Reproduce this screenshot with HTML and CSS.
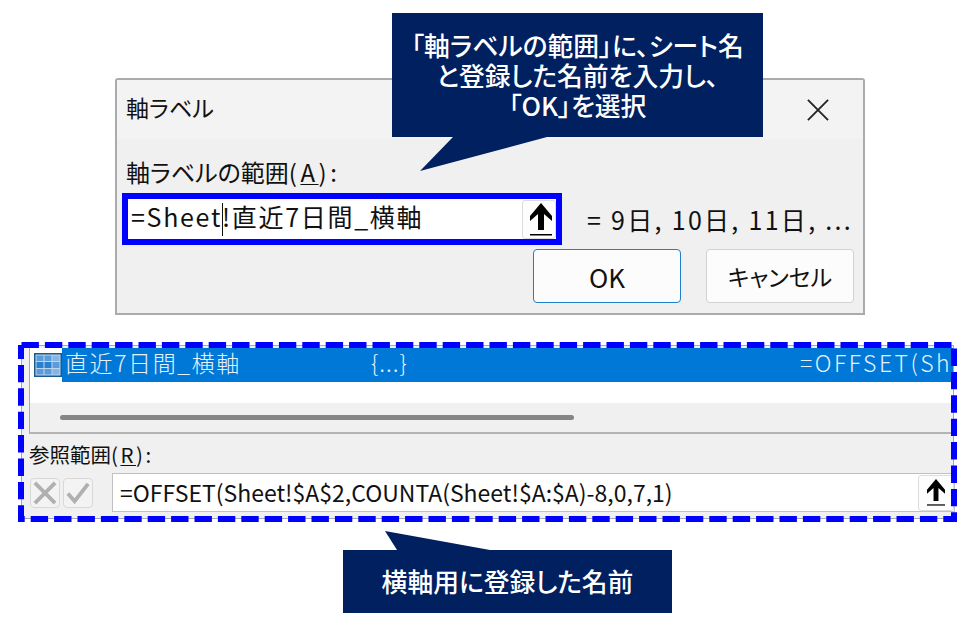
FILE: index.html
```html
<!DOCTYPE html>
<html lang="ja">
    <head>
        <meta charset="utf-8" />
        <title>軸ラベル</title>
        <link rel="stylesheet" href="styles.css">
    </head>
    <body>
        <section class="dialog">
            <header class="dialog-title">
                <span class="title-text">軸ラベル</span>
                <svg class="close" viewBox="0 0 24 24"><path d="M1 1 L23 23 M23 1 L1 23" /></svg>
            </header>
            <div class="dialog-body">
                <div class="field-label">軸ラベルの範囲<span class="key">(<u>A</u>):</span></div>
                <div class="field-row">
                    <div class="range-box">
                        <span class="range-text">=Sheet<i class="caret"></i>!直近7日間_横軸</span>
                        <button class="pick">
                            <svg class="arrow" viewBox="0 0 22 33"><path d="M11 0 L22 13 L22 18 L14 11 V27 H8 V11 L0 18 V13 Z" /><rect y="31" width="22" height="1.5" /></svg>
                        </button>
                    </div>
                    <span class="preview">= 9日, 10日, 11日, ...</span>
                </div>
                <div class="actions">
                    <button class="btn btn-ok">OK</button>
                    <button class="btn">キャンセル</button>
                </div>
            </div>
        </section>

        <section class="panel">
            <div class="panel-inner">
                <div class="list">
                    <div class="list-row">
                        <svg class="grid-icon" viewBox="0 0 28 24">
                            <rect x="0.75" y="0.75" width="26.5" height="22.5" fill="#b9d6f0" stroke="#1d5a8a" stroke-width="1.5" />
                            <rect x="2.5" y="2.5" width="7" height="5.5" fill="#5a9bd8" />
                            <rect x="10.5" y="2.5" width="7" height="5.5" fill="#5a9bd8" />
                            <rect x="18.5" y="2.5" width="7" height="5.5" fill="#84b5e4" />
                            <rect x="2.5" y="9" width="7" height="6" fill="#2a80cf" />
                            <rect x="10.5" y="9" width="7" height="6" fill="#2a80cf" />
                            <rect x="18.5" y="9" width="7" height="6" fill="#5a9bd8" />
                            <rect x="2.5" y="16" width="7" height="5.5" fill="#5a9bd8" />
                            <rect x="10.5" y="16" width="7" height="5.5" fill="#5a9bd8" />
                            <rect x="18.5" y="16" width="7" height="5.5" fill="#84b5e4" />
                        </svg>
                        <div class="selected">
                            <span class="col-name">直近7日間_横軸</span>
                            <span class="col-value">{...}</span>
                            <span class="col-ref">=OFFSET(Sh</span>
                        </div>
                    </div>
                    <div class="list-blank"></div>
                    <div class="scroll-track"><div class="scroll-thumb"></div></div>
                </div>
                <div class="ref-label">参照範囲<span class="key key-small">(<u>R</u>):</span></div>
                <div class="ref-row">
                    <button class="tool">
                        <svg viewBox="0 0 27 27"><path class="tool-mark" d="M3 3 L24 24 M24 3 L3 24" /></svg>
                    </button>
                    <button class="tool">
                        <svg viewBox="0 0 27 27"><path class="tool-mark" d="M3 14 L10 22 L24 4" /></svg>
                    </button>
                    <div class="ref-input">
                        <span>=OFFSET(Sheet!$A$2,COUNTA(Sheet!$A:$A)-8,0,7,1)</span>
                        <button class="pick pick-small">
                            <svg class="arrow" viewBox="0 0 22 33"><path d="M11 0 L22 13 L22 18 L14 11 V27 H8 V11 L0 18 V13 Z" /><rect y="31" width="22" height="1.5" /></svg>
                        </button>
                    </div>
                </div>
            </div>
            <svg class="dash" viewBox="0 0 939 180"><rect x="3" y="3" width="933" height="174" /></svg>
        </section>

        <div class="callout callout-top">
            「軸ラベルの範囲」に、シート名<br />と登録した名前を入力し、<br />「OK」を選択
            <svg class="tail tail-top" viewBox="0 0 127 34"><path d="M33 0 L0 34 L127 0 Z" /></svg>
        </div>
        <div class="callout callout-bottom">
            横軸用に登録した名前
            <svg class="tail tail-bottom" viewBox="0 0 105 19"><path d="M0 0 L12 19 L105 19 Z" /></svg>
        </div>
    </body>
</html>
```

FILE: styles.css
```css
body {
    margin: 0;
    background-color: #ffffff;
    color: #111111;
    font-family: "Noto Sans CJK JP", "Noto Sans", sans-serif;
    font-feature-settings: "palt";
    position: relative;
    height: 618px;
    overflow: hidden;
}

button {
    font-family: inherit;
    font-feature-settings: inherit;
    color: inherit;
    padding: 0;
}

u {
    text-underline-offset: 2px;
}

.key {
    letter-spacing: 3.5px;
}

.key-small {
    letter-spacing: 2.5px;
}

/* upper dialog */
.dialog {
    box-sizing: border-box;
    width: 750px;
    height: 237px;
    margin: 78px 0 0 115px;
    border: 2px solid #ababab;
    border-radius: 3px 3px 0 0;
    background-color: #f0f0f0;
}

.dialog-title {
    display: flex;
    justify-content: space-between;
    align-items: center;
    height: 59px;
    padding: 0 34px 0 9px;
    background-color: #f3f3f3;
    font-size: 23px;
}

.title-text {
    margin-top: -5px;
}

.close {
    width: 22px;
    height: 22px;
}

.close path {
    fill: none;
    stroke: #222222;
    stroke-width: 2;
}

.dialog-body {
    padding: 13px 9px 0 5px;
}

.field-label {
    height: 41px;
    padding-left: 4px;
    font-size: 24px;
    line-height: 39px;
}

.field-row {
    display: flex;
    align-items: center;
    height: 52px;
}

.range-box {
    box-sizing: border-box;
    display: flex;
    justify-content: space-between;
    align-items: center;
    width: 440px;
    height: 52px;
    border: 6px solid #0000ff;
    background-color: #ffffff;
    font-size: 25px;
    letter-spacing: 1.7px;
}

.range-text {
    padding-left: 3px;
    margin-top: -4px;
    white-space: nowrap;
}

.caret {
    display: inline-block;
    width: 1px;
    height: 33px;
    margin-right: -1px;
    vertical-align: middle;
    background-color: #111111;
}

.pick {
    box-sizing: border-box;
    display: flex;
    justify-content: center;
    align-items: center;
    width: 34px;
    height: 39px;
    border: 1px solid #dddddd;
    border-radius: 3px;
    background-color: #fdfdfd;
}

.arrow {
    display: block;
    width: 22px;
    height: 33px;
    margin-left: 3px;
}

.preview {
    margin-left: 25px;
    font-size: 25px;
    letter-spacing: 2.3px;
    white-space: nowrap;
}

.actions {
    display: flex;
    justify-content: flex-end;
    gap: 25px;
    margin-top: 4px;
}

.btn {
    box-sizing: border-box;
    width: 148px;
    height: 54px;
    border: 1px solid #d2d2d2;
    border-radius: 4px;
    background-color: #fcfcfc;
    font-size: 23px;
}

.btn-ok {
    border: 1.5px solid #1f7fcb;
    font-size: 26px;
}

/* lower panel */
.panel {
    position: relative;
    box-sizing: border-box;
    width: 939px;
    height: 180px;
    margin: 27px 0 0 18px;
    padding: 3px;
}

.panel-inner {
    box-sizing: border-box;
    height: 174px;
    padding: 2px 0 0 7px;
    border: 1px solid #a8a8a8;
    background-color: #f0f0f0;
}

.list {
    border-left: 1px solid #a8a8a8;
    border-bottom: 2px solid #b4b4b4;
    background-color: #ffffff;
}

.list-row {
    display: flex;
    align-items: center;
    height: 34px;
    padding-left: 4px;
}

.grid-icon {
    flex: none;
    width: 28px;
    height: 24px;
}

.selected {
    box-sizing: border-box;
    flex: 1;
    display: flex;
    align-items: center;
    min-width: 0;
    height: 34px;
    padding-bottom: 6px;
    background-color: #0078d7;
    color: #e6f2fb;
    font-size: 23px;
    font-weight: 300;
    line-height: 28px;
    white-space: nowrap;
}

.col-name {
    box-sizing: border-box;
    flex: none;
    width: 306px;
    padding-left: 3px;
    letter-spacing: 1.6px;
}

.col-value {
    flex: none;
    width: 430px;
    margin-left: 3px;
    letter-spacing: 1px;
}

.col-ref {
    flex: none;
    margin-left: -1px;
    letter-spacing: 2.5px;
}

.list-blank {
    height: 21px;
}

.scroll-track {
    box-sizing: border-box;
    height: 29px;
    padding: 12px 0 0 30px;
    background-color: #f0f0f0;
}

.scroll-thumb {
    width: 514px;
    height: 5px;
    border-radius: 3px;
    background-color: #858585;
}

.ref-label {
    height: 39px;
    font-size: 20.5px;
    line-height: 40px;
}

.key u {
    text-decoration-thickness: 1px;
}

.ref-row {
    display: flex;
    align-items: center;
    height: 39px;
    padding-left: 1px;
}

.tool {
    box-sizing: border-box;
    width: 30px;
    height: 30px;
    margin-right: 3px;
    border: 1px solid #d8d8d8;
    border-radius: 4px;
    background-color: #f3f3f3;
}

.tool svg {
    display: block;
    width: 26px;
    height: 26px;
    margin: auto;
}

.tool-mark {
    fill: none;
    stroke: #b0b0b0;
    stroke-width: 4;
}

.ref-input {
    box-sizing: border-box;
    display: flex;
    justify-content: space-between;
    align-items: center;
    flex: 1;
    height: 39px;
    margin: 0 -2px 0 16px;
    padding-left: 7px;
    border: 1px solid #c0c0c0;
    background-color: #ffffff;
    font-size: 23px;
    white-space: nowrap;
}

.ref-input span {
    margin-top: -2px;
}

.pick-small {
    width: 36px;
    height: 36px;
}

.pick-small .arrow {
    width: 18px;
    height: 27px;
    margin-left: 0;
}

.dash {
    position: absolute;
    left: 0;
    top: 0;
    width: 939px;
    height: 180px;
}

.dash rect {
    fill: none;
    stroke: #0000ff;
    stroke-width: 6;
    stroke-dasharray: 17.4 6;
    stroke-dashoffset: -0.5;
}

/* annotation callouts */
.callout {
    position: absolute;
    box-sizing: border-box;
    background-color: #002060;
    color: #ffffff;
    font-size: 25.8px;
    font-weight: 500;
    text-align: center;
}

.callout-top {
    left: 392px;
    top: 13px;
    width: 371px;
    height: 124px;
    padding-top: 17px;
    line-height: 30px;
}

.callout-bottom {
    left: 343px;
    top: 550px;
    width: 329px;
    height: 63px;
    line-height: 62px;
}

.tail {
    position: absolute;
    fill: #002060;
}

.tail-top {
    left: 28px;
    top: 124px;
    width: 127px;
    height: 34px;
}

.tail-bottom {
    left: 42px;
    top: -19px;
    width: 105px;
    height: 19px;
}
```
